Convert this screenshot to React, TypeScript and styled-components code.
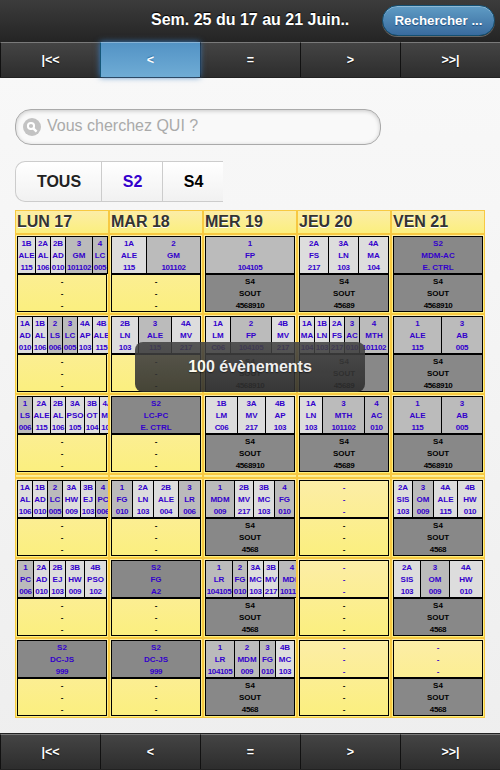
import React from "react";
import styled, { createGlobalStyle, css } from "styled-components";

const GlobalStyle = createGlobalStyle`
  * { box-sizing: border-box; }
  body {
    margin: 0;
    background: #eee;
    font-family: "Liberation Sans", Arial, Helvetica, sans-serif;
  }
`;

const Page = styled.div`
  position: relative;
  display: flex;
  flex-direction: column;
  width: 500px;
  height: 770px;
  overflow: hidden;
  background: linear-gradient(#f9f9f9, #eee);
`;

const Header = styled.header`
  display: grid;
  grid-template-columns: 1fr 198px 1fr;
  align-items: center;
  height: 42px;
  flex: none;
  padding-bottom: 2px;
  background: linear-gradient(#3c3c3c, #242424);
`;

const Title = styled.h1`
  grid-column: 2;
  margin: 0;
  font-size: 16px;
  line-height: 20px;
  white-space: nowrap;
  color: #fff;
  text-shadow: 0 -1px 1px #000;
`;

const SearchButton = styled.button`
  justify-self: end;
  width: 113px;
  height: 31px;
  margin-right: 5px;
  padding: 1px 0 0;
  border: 1px solid #145072;
  border-radius: 16px;
  background: linear-gradient(#5f9cc5, #396b9e);
  box-shadow: inset 0 1px 0 rgba(255, 255, 255, 0.3), 0 1px 0 rgba(255, 255, 255, 0.3);
  font: bold 13.3px "Liberation Sans", Arial, sans-serif;
  color: #fff;
  text-shadow: 0 1px 1px #194b7e;
`;

const Navbar = styled.nav`
  display: grid;
  grid-template-columns: repeat(5, 100px);
  height: 36px;
  flex: none;
  border-bottom: 1px solid #222;
  background: #2d2d2d;
`;

const FooterBar = styled.footer`
  height: 37px;
  flex: none;
  border-top: 1px solid #222;
`;

const NavButton = styled.a<{ $active?: boolean }>`
  display: flex;
  align-items: center;
  justify-content: center;
  border-left: 1px solid #111;
  border-top: 1px solid #7a7a7a;
  background: linear-gradient(#444, #2d2d2d);
  font-size: 12.5px;
  font-weight: bold;
  color: #fff;
  text-shadow: 0 1px 1px #111;
  ${(p) =>
    p.$active &&
    css`
      position: relative;
      border-left-color: #155678;
      border-top-color: #87b3d6;
      background: linear-gradient(#5393c5, #6facd5);
      box-shadow: 0 0 6px #387bbe;
      text-shadow: 0 -1px 1px #3373a5;
    `}
`;

const Content = styled.main`
  flex: 1;
  padding: 31px 15px 0;
`;

const SearchField = styled.label`
  display: flex;
  align-items: center;
  width: 366px;
  height: 36px;
  padding: 0 0 1px 7px;
  border: 1px solid #aaa;
  border-radius: 16px;
  background: #f9f9f9;
  box-shadow: inset 0 1px 4px rgba(0, 0, 0, 0.2);
`;

const SearchInput = styled.input`
  flex: 1;
  height: 22px;
  margin: 0 0 1px 6px;
  padding: 0;
  border: 0;
  background: none;
  outline: none;
  font: 16px "Liberation Sans", Arial, sans-serif;
  color: #aaa;
  &::placeholder { color: #aaa; opacity: 1; }
`;

const Filters = styled.div`
  display: flex;
  width: 208px;
  height: 41px;
  margin: 16px 0 8px;
  border: 1px solid #ccc;
  border-right: 0;
  border-radius: 10px 0 0 10px;
  background: linear-gradient(#fff, #f1f1f1);
`;

const Filter = styled.span<{ $width: number; $color: string }>`
  width: ${(p) => p.$width}px;
  padding-left: 1px;
  font-size: 16px;
  font-weight: bold;
  line-height: 39px;
  text-align: center;
  color: ${(p) => p.$color};
  text-shadow: 0 1px 0 #fff;
  & + & { border-left: 1px solid #ccc; }
`;

const Timetable = styled.section`
  display: grid;
  grid-template-columns: repeat(5, 94px);
`;

const yellowPanel = css`
  border: 1px solid #f7c942;
  background: linear-gradient(#fceda7, #fbef7e) padding-box;
`;

const DayHeading = styled.h2`
  ${yellowPanel}
  height: 24px;
  margin: 0;
  padding-left: 1px;
  font-size: 16px;
  line-height: 22px;
  color: #333;
  text-shadow: 0 1px 0 #fff;
`;

const HalfDayDivider = styled.div`
  ${yellowPanel}
  height: 4px;
`;

const Slot = styled.div`
  ${yellowPanel}
  height: 80px;
  padding: 1px;
  overflow: hidden;
`;

const Track = styled.div`
  display: flex;
  width: max-content;
  height: 38px;
  border: 1px solid #000;
  border-right: 0;
`;

type Tone = "none" | "half" | "group" | "all";
const tones: Record<Tone, string> = {
  none: "transparent",
  half: "#ddd",
  group: "#bbb",
  all: "#888",
};

const Lesson = styled.div<{ $width: number; $tone: Tone; $ink: string }>`
  display: flex;
  flex-direction: column;
  align-items: center;
  flex: none;
  width: ${(p) => p.$width}px;
  border-right: 1px solid #000;
  background: ${(p) => tones[p.$tone]};
  color: ${(p) => p.$ink};
`;

const Line = styled.span<{ $digits: boolean }>`
  height: 12px;
  font-size: 8px;
  font-weight: bold;
  line-height: 14px;
  white-space: nowrap;
  letter-spacing: ${(p) => (p.$digits ? "-0.35px" : "0")};
`;

const Toast = styled.div`
  position: absolute;
  left: 135px;
  top: 342px;
  width: 230px;
  height: 50px;
  border-radius: 8px;
  opacity: 0.88;
  background: linear-gradient(#444, #2d2d2d);
  font-size: 16px;
  font-weight: bold;
  line-height: 49px;
  text-align: center;
  color: #fff;
  text-shadow: 0 1px 1px #111;
`;

/* Each entry is "width group subject room"; underscores stand for spaces. */
type Cell = [lessons: string, evening: string];
const EMPTY = "89 - - -";

const morning: Cell[][] = [
  [
    ["18 1B ALE 115|15 2A AL 106|15 2B AD 010|27 3 GM 101102|15 4 LC 005", ""],
    ["35 1A ALE 115|54 2 GM 101102", ""],
    ["89 1 FP 104105", "4568910"],
    ["29 2A FS 217|30 3A LN 103|30 4A MA 104", "45689"],
    ["89 S2 MDM-AC E._CTRL", "4568910"],
  ],
  [
    ["15 1A AD 010|15 1B AL 106|15 2 LS 006|15 3 LC 005|15 4A AP 103|18 4B ALE 115", ""],
    ["27 2B LN 103|33 3 ALE 115|29 4A MV 217", ""],
    ["25 1A LM C06|41 2 FP 104105|23 4B MV 217", "4568910"],
    ["15 1A MA 104|15 1B LN 103|15 2A FS 217|15 3 AC 010|29 4 MTH 101102", "45689"],
    ["48 1 ALE 115|41 3 AB 005", "4568910"],
  ],
  [
    ["15 1 LS 006|18 2A ALE 115|15 2B AL 106|19 3A PSO 105|15 3B OT 104|16 4A MA 104", ""],
    ["89 S2 LC-PC E._CTRL", ""],
    ["32 1B LM C06|28 3A MV 217|29 4B AP 103", "4568910"],
    ["23 1A LN 103|42 3 MTH 101102|24 4 AC 010", "45689"],
    ["48 1 ALE 115|41 3 AB 005", "4568910"],
  ],
];

const afternoon: Cell[][] = [
  [
    ["15 1A AL 106|15 1B AD 010|15 2 LC 005|18 3A HW 009|15 3B EJ 103|15 4 PC 006", ""],
    ["21 1 FG 010|21 2A LN 103|25 2B ALE 004|22 3 LR 006", ""],
    ["29 1 MDM 009|19 2B MV 217|21 3B MC 103|20 4 FG 010", "4568"],
    [EMPTY, ""],
    ["19 2A SIS 103|21 3 OM 009|24 4A ALE 115|25 4B HW 010", "4568"],
  ],
  [
    ["16 1 PC 006|16 2A AD 010|16 2B EJ 103|19 3B HW 009|22 4B PSO 102", ""],
    ["89 S2 FG A2", ""],
    ["27 1 LR 104105|15 2 FG 010|16 3A MC 103|15 3B MV 217|27 4 MDM 101102", "4568"],
    [EMPTY, ""],
    ["27 2A SIS 103|29 3 OM 009|33 4A HW 010", "4568"],
  ],
  [
    ["89 S2 DC-JS 999", ""],
    ["89 S2 DC-JS 999", ""],
    ["29 1 LR 104105|25 2 MDM 009|16 3 FG 010|19 4B MC 103", "4568"],
    [EMPTY, ""],
    [EMPTY, "4568"],
  ],
];

const days = ["LUN 17", "MAR 18", "MER 19", "JEU 20", "VEN 21"];

function toneOf(group: string): Tone {
  if (group === "-") return "none";
  if (group[0] === "S") return "all";
  return group.length === 2 ? "half" : "group";
}

function Lessons({ spec, ink }: { spec: string; ink: string }) {
  return (
    <Track>
      {spec.split("|").map((item, i) => {
        const [width, ...lines] = item.split(" ");
        return (
          <Lesson key={i} $width={Number(width)} $tone={toneOf(lines[0])} $ink={ink}>
            {lines.map((line, j) => (
              <Line key={j} $digits={/^C?\d{2,}$/.test(line)}>
                {line.replace("_", " ")}
              </Line>
            ))}
          </Lesson>
        );
      })}
    </Track>
  );
}

function Slots({ rows }: { rows: Cell[][] }) {
  return (
    <>
      {rows.flatMap((row, r) =>
        row.map(([lessons, evening], c) => (
          <Slot key={`${r}-${c}`}>
            <Lessons spec={lessons} ink="#3300cc" />
            <Lessons spec={evening ? `89 S4 SOUT ${evening}` : EMPTY} ink="#000" />
          </Slot>
        ))
      )}
    </>
  );
}

function NavButtons({ active }: { active?: string }) {
  return (
    <Navbar>
      {["|<<", "<", "=", ">", ">>|"].map((label) => (
        <NavButton key={label} $active={label === active}>
          {label}
        </NavButton>
      ))}
    </Navbar>
  );
}

function SearchIcon() {
  return (
    <svg width="18" height="18" viewBox="0 0 18 18">
      <circle cx="9" cy="9" r="9" fill="#c3c3c3" />
      <circle cx="8" cy="8" r="3.1" fill="none" stroke="#fff" strokeWidth="2" />
      <path d="M10.3 10.3 L13.6 13.6" stroke="#fff" strokeWidth="2.4" />
    </svg>
  );
}

export default function App() {
  return (
    <Page>
      <GlobalStyle />
      <Header>
        <Title>Sem. 25 du 17 au 21 Juin..</Title>
        <SearchButton>Rechercher ...</SearchButton>
      </Header>
      <NavButtons active="<" />
      <Content>
        <SearchField>
          <SearchIcon />
          <SearchInput placeholder="Vous cherchez QUI ?" />
        </SearchField>
        <Filters>
          <Filter $width={85} $color="#222">TOUS</Filter>
          <Filter $width={61} $color="#3300cc">S2</Filter>
          <Filter $width={61} $color="#000">S4</Filter>
        </Filters>
        <Timetable>
          {days.map((day) => (
            <DayHeading key={day}>{day}</DayHeading>
          ))}
          <Slots rows={morning} />
          {days.map((day) => (
            <HalfDayDivider key={day} />
          ))}
          <Slots rows={afternoon} />
        </Timetable>
      </Content>
      <FooterBar>
        <NavButtons />
      </FooterBar>
      <Toast>100 évènements</Toast>
    </Page>
  );
}
